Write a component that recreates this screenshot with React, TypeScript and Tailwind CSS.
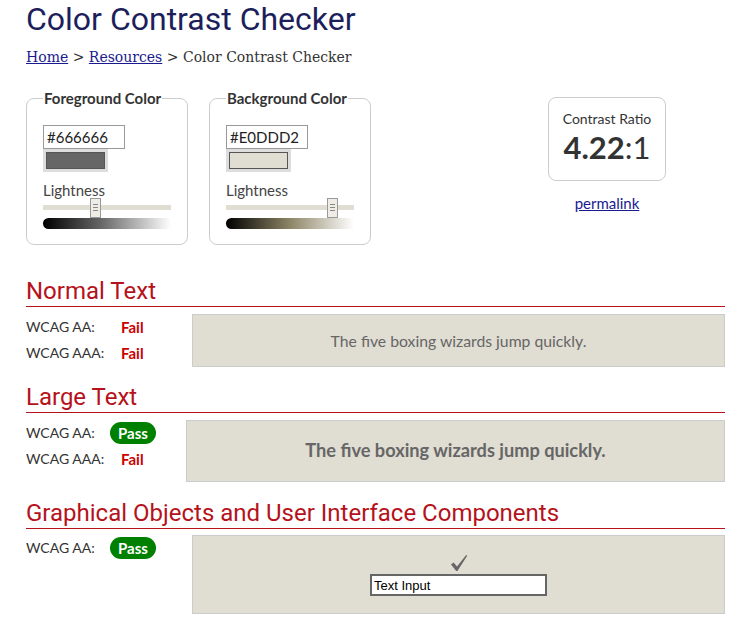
import { useState } from "react";

const body = { fontFamily: "Lato, 'Noto Sans', sans-serif" };
const head = { fontFamily: "Roboto, 'Liberation Sans', sans-serif" };

function Pill({ pass }: { pass: boolean }) {
  if (pass) {
    return (
      <span className="inline-block rounded-full bg-[#008000] px-[8px] text-[15px] leading-[22px] font-bold text-white">
        Pass
      </span>
    );
  }
  return <span className="text-[15px] font-bold text-[#cc0000]">Fail</span>;
}

function ColorBox({
  legend,
  value,
  swatch,
  thumbLeft,
  gradient,
}: {
  legend: string;
  value: string;
  swatch: string;
  thumbLeft: number;
  gradient: string;
}) {
  const [v, setV] = useState(value);
  return (
    <fieldset className="w-[162px] h-[158px] rounded-lg border border-[#cccccc] px-[16px]">
      <legend className="px-[1px] text-[15px] font-bold text-[#333333]">{legend}</legend>
      <input
        value={v}
        onChange={(e) => setV(e.target.value)}
        className="mt-[15px] block h-[24px] w-[82px] border border-[#999999] bg-white px-[3px] text-[15px] text-[#222222] outline-none"
      />
      <div className="w-[65px] bg-[#dddddd] p-[3px]">
        <div className="h-[17px] border border-[#555555]" style={{ background: swatch }} />
      </div>
      <div className="mt-[10px] text-[15px] leading-[16px] text-[#444444]">Lightness</div>
      <div className="relative h-[20px] w-[128px]">
        <div className="absolute left-0 right-0 top-[7px] h-[5px] bg-[#e0ddd2]" />
        <div
          className="absolute top-0 flex h-[20px] w-[11px] flex-col items-center justify-center gap-[2px] border border-[#999999] bg-[#efece6]"
          style={{ left: thumbLeft }}
        >
          <span className="h-px w-[5px] bg-[#888888]" />
          <span className="h-px w-[5px] bg-[#888888]" />
          <span className="h-px w-[5px] bg-[#888888]" />
        </div>
      </div>
      <div className="h-[11px] w-[128px] rounded-l-full" style={{ background: gradient }} />
    </fieldset>
  );
}

function Section({ title, children }: { title: string; children: React.ReactNode }) {
  return (
    <>
      <h2
        className="border-b border-[#b5121b] text-[24px] leading-[29px] text-[#b5121b]"
        style={head}
      >
        {title}
      </h2>
      {children}
    </>
  );
}

export default function App() {
  return (
    <div className="min-h-[631px] bg-white pl-[26px] pr-[19px] text-[#333333]" style={body}>
      <h1 className="text-[32px] leading-[38px] text-[#1d1f5c]" style={head}>
        Color Contrast Checker
      </h1>
      <div
        className="mt-[7px] text-[14px] leading-[24px] text-[#333333]"
        style={{ fontFamily: "'DejaVu Serif', serif" }}
      >
        <a href="#" className="text-[#1a1a8f] underline">Home</a> &gt;{" "}
        <a href="#" className="text-[#1a1a8f] underline">Resources</a> &gt; Color Contrast Checker
      </div>

      <div className="mt-[18px] flex items-start">
        <ColorBox
          legend="Foreground Color"
          value="#666666"
          swatch="#666666"
          thumbLeft={47}
          gradient="linear-gradient(to right, #000000, #666666 45%, #ffffff)"
        />
        <div className="ml-[21px]">
          <ColorBox
            legend="Background Color"
            value="#E0DDD2"
            swatch="#e0ddd2"
            thumbLeft={101}
            gradient="linear-gradient(to right, #000000, #8e8566 50%, #ffffff)"
          />
        </div>
        <div className="ml-[177px] mt-[10px] flex flex-col items-center">
          <div className="flex h-[84px] w-[118px] flex-col items-center rounded-lg border border-[#cccccc] pt-[11px]">
            <div className="text-[14px] leading-[20px] text-[#333333]">Contrast Ratio</div>
            <div className="text-[31px] leading-[36px] text-[#333333]">
              <b>4.22</b>:1
            </div>
          </div>
          <a href="#" className="mt-[12px] text-[15px] leading-[20px] text-[#1a1a8f] underline">
            permalink
          </a>
        </div>
      </div>

      <div className="mt-[32px]">
        <Section title="Normal Text">
          <div className="mt-[7px] flex">
            <div className="w-[166px] shrink-0 whitespace-nowrap text-[14px] leading-[26px]">
              <div className="flex">
                <span className="w-[95px]">WCAG AA:</span>
                <Pill pass={false} />
              </div>
              <div className="flex">
                <span className="w-[95px]">WCAG AAA:</span>
                <Pill pass={false} />
              </div>
            </div>
            <div className="flex h-[53px] flex-1 items-center justify-center border border-[#cccccc] bg-[#e0ddd2] text-[15.75px] text-[#666666]">
              The five boxing wizards jump quickly.
            </div>
          </div>
        </Section>
      </div>

      <div className="mt-[16px]">
        <Section title="Large Text">
          <div className="mt-[7px] flex">
            <div className="w-[160px] shrink-0 whitespace-nowrap text-[14px] leading-[26px]">
              <div className="flex h-[26px] items-center">
                <span className="w-[84px]">WCAG AA:</span>
                <Pill pass={true} />
              </div>
              <div className="flex">
                <span className="w-[95px]">WCAG AAA:</span>
                <Pill pass={false} />
              </div>
            </div>
            <div className="flex h-[62px] flex-1 items-center justify-center border border-[#cccccc] bg-[#e0ddd2] text-[18.2px] font-bold text-[#666666]">
              The five boxing wizards jump quickly.
            </div>
          </div>
        </Section>
      </div>

      <div className="mt-[17px]">
        <Section title="Graphical Objects and User Interface Components">
          <div className="mt-[6px] flex">
            <div className="w-[166px] shrink-0 whitespace-nowrap text-[14px] leading-[26px]">
              <div className="flex h-[26px] items-center">
                <span className="w-[84px]">WCAG AA:</span>
                <Pill pass={true} />
              </div>
            </div>
            <div className="flex h-[79px] flex-1 flex-col items-center border border-[#cccccc] bg-[#e0ddd2] pt-[18px]">
              <svg width="18" height="18" viewBox="0 0 18 18" className="block">
                <path d="M1 10.5 L3.6 8.6 L7 12.6 L16.2 1 L17.2 1.8 L7.4 17 L6.2 17 Z" fill="#666666" />
              </svg>
              <input
                defaultValue="Text Input"
                className="mt-[2px] h-[22px] w-[177px] border-2 border-[#666666] bg-white px-[2px] text-[13px] text-black outline-none"
                style={{ fontFamily: "'Liberation Sans', Arial, sans-serif" }}
              />
            </div>
          </div>
        </Section>
      </div>
    </div>
  );
}
